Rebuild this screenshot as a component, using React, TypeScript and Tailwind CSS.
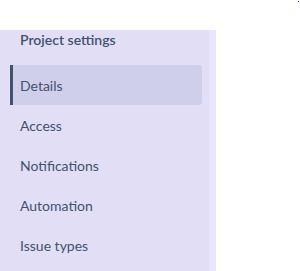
const items = ['Details', 'Access', 'Notifications', 'Automation', 'Issue types'];

export default function App() {
  const active = 'Details';

  return (
    <div className="relative h-[271px] w-[300px] bg-white font-['Segoe_UI','Lato',sans-serif]">
      <span className="absolute right-[1px] top-[1px] h-px w-px bg-[#2b2bff]" />
      <div className="flex h-full flex-col pt-[30px]">
        <div className="flex flex-1">
          <nav className="w-[209px] bg-[#e1def6]">
            <h2 className="h-5 pl-5 text-[14px] font-semibold leading-5 text-[#42526e]">Project settings</h2>
            <ul className="mt-[15px] flex flex-col">
              {items.map((item) => (
                <li
                  key={item}
                  className={
                    item === active
                      ? 'ml-[10px] flex h-10 w-[192px] items-center rounded-r-[3px] border-l-[3px] border-[#42526e] bg-[#d0cfe9] pl-[7px] text-[14px] text-[#42526e]'
                      : 'ml-[10px] flex h-10 w-[192px] items-center pl-[10px] text-[14px] text-[#42526e]'
                  }
                >
                  {item}
                </li>
              ))}
            </ul>
          </nav>
          <div className="w-[7px] bg-[#e9e6fb]" />
        </div>
      </div>
    </div>
  );
}
